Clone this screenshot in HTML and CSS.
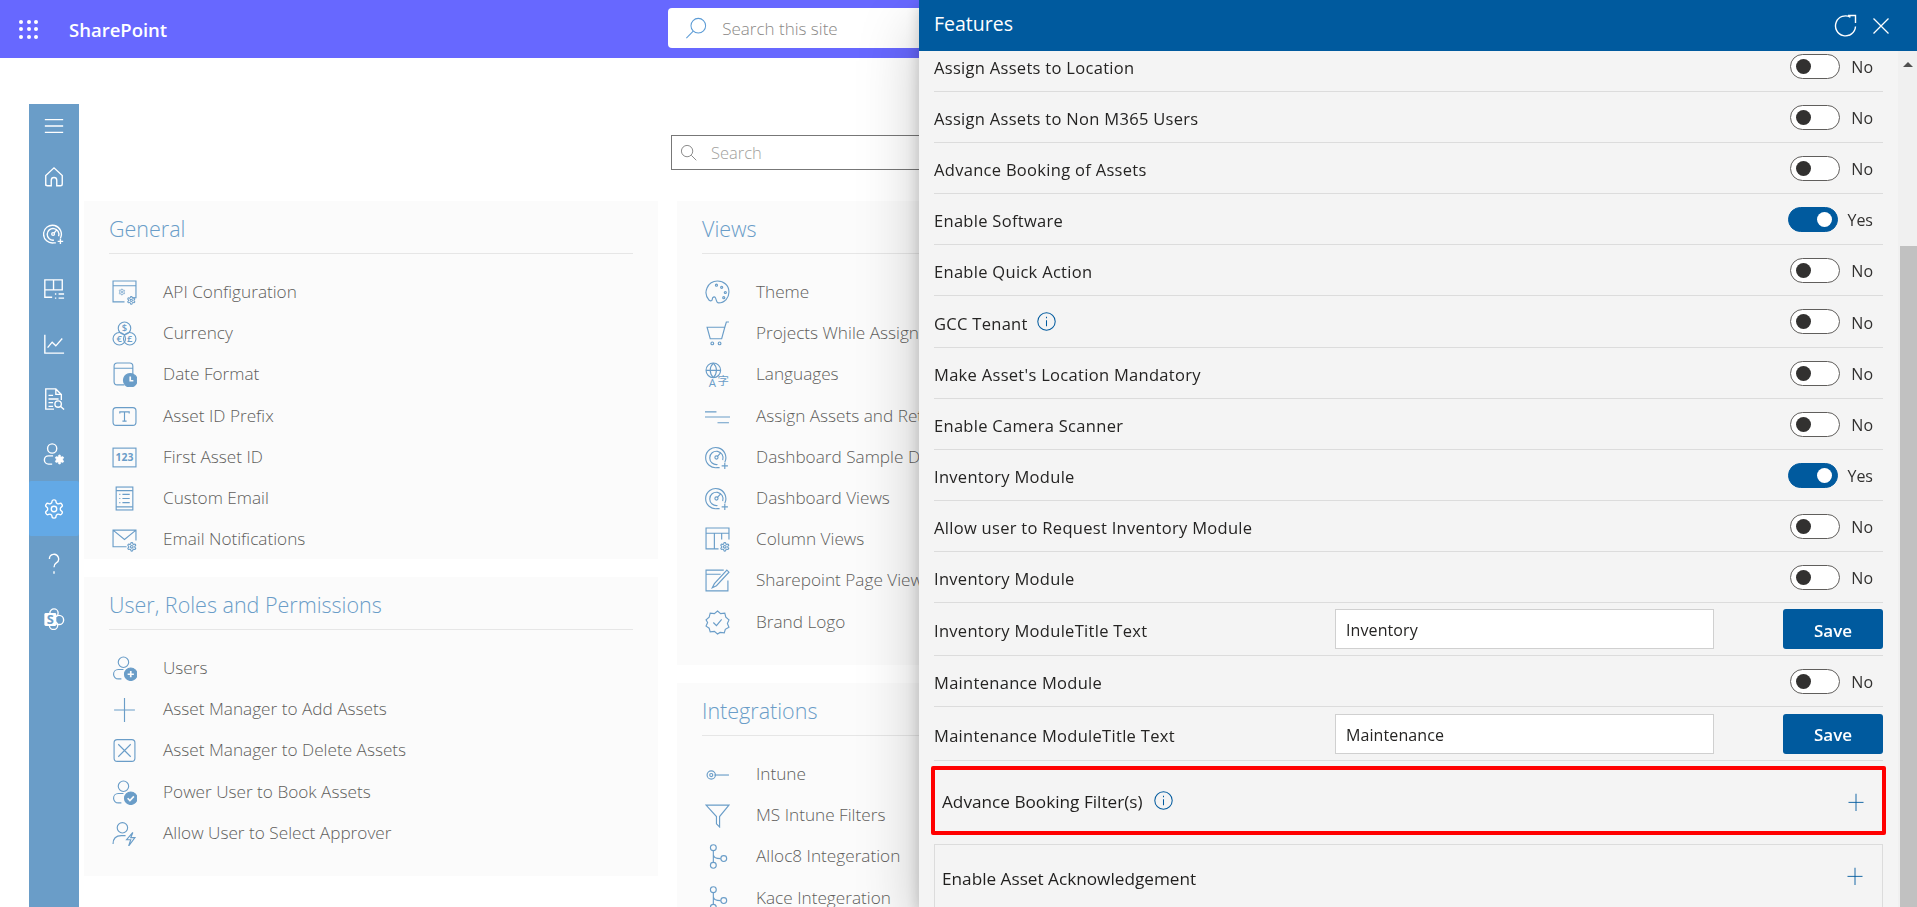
FILE: index.html
```html
<!DOCTYPE html>
<html lang="en">
<head>
<meta charset="utf-8">
<title>Features</title>
<link rel="stylesheet" href="styles.css">
</head>
<body>
<svg class="defs" width="0" height="0" aria-hidden="true">
<defs>
<symbol id="gear" viewBox="0 0 24 24"><path d="M12.22 2h-.44a2 2 0 0 0-2 2v.18a2 2 0 0 1-1 1.73l-.43.25a2 2 0 0 1-2 0l-.15-.08a2 2 0 0 0-2.73.73l-.22.38a2 2 0 0 0 .73 2.73l.15.1a2 2 0 0 1 1 1.72v.51a2 2 0 0 1-1 1.74l-.15.09a2 2 0 0 0-.73 2.73l.22.38a2 2 0 0 0 2.73.73l.15-.08a2 2 0 0 1 2 0l.43.25a2 2 0 0 1 1 1.73V20a2 2 0 0 0 2 2h.44a2 2 0 0 0 2-2v-.18a2 2 0 0 1 1-1.73l.43-.25a2 2 0 0 1 2 0l.15.08a2 2 0 0 0 2.73-.73l.22-.39a2 2 0 0 0-.73-2.73l-.15-.08a2 2 0 0 1-1-1.74v-.5a2 2 0 0 1 1-1.74l.15-.09a2 2 0 0 0 .73-2.73l-.22-.38a2 2 0 0 0-2.73-.73l-.15.08a2 2 0 0 1-2 0l-.43-.25a2 2 0 0 1-1-1.73V4a2 2 0 0 0-2-2z"/><circle cx="12" cy="12" r="3"/></symbol>
<symbol id="dash" viewBox="0 0 24 24"><path d="M19 16.500A9.700 9.700 0 1 0 12 21.700h2"/><path d="M17 14.500a6.400 6.400 0 1 0-5 4.200"/><circle cx="11" cy="12" r="1.500"/><path d="M12 11l3-3.500M19 17v6M16 20h6"/></symbol>
<symbol id="api" viewBox="0 0 24 24"><path d="M19 17h4V1H1v20h11M1 5.500h22"/><use href="#gear" class="sg" x="6" y="8" width="7" height="7"/><use href="#gear" class="sg" x="14" y="15" width="9" height="9"/></symbol>
<symbol id="currency" viewBox="0 0 24 24"><circle cx="12" cy="7" r="6"/><circle cx="7" cy="17" r="6"/><circle cx="17" cy="17" r="6"/><text x="12" y="10" class="g">$</text><text x="7" y="20" class="g">€</text><text x="17" y="20" class="g">£</text></symbol>
<symbol id="date" viewBox="0 0 24 24"><path d="M12 22H5a3 3 0 0 1-3-3V4a3 3 0 0 1 3-3h12a3 3 0 0 1 3 3v8M2 6h18"/><circle class="solid" cx="17.500" cy="17.500" r="6.500"/><path class="cut" d="M17.500 14v4h3"/></symbol>
<symbol id="prefix" viewBox="0 0 24 24"><rect x="1" y="3.500" width="22" height="17" rx="3"/><path d="M7.500 9V7.500h9V9M12 7.500v9M10 16.500h4"/></symbol>
<symbol id="num" viewBox="0 0 24 24"><rect x="1" y="3" width="22" height="18"/><text x="12" y="15.500" class="n">123</text></symbol>
<symbol id="doc" viewBox="0 0 24 24"><rect x="4" y="1" width="16" height="22"/><path d="M4 4.500h16M7 8h1M10 8h7M7 12h1M10 12h7M7 16h1M10 16h7M4 20h16"/></symbol>
<symbol id="mail" viewBox="0 0 24 24"><path d="M14 19H1V3h22v10M1 3l11 9 11-9"/><use href="#gear" class="sg" x="14" y="14" width="10" height="10"/></symbol>
<symbol id="useradd" viewBox="0 0 24 24"><circle cx="11" cy="6" r="5"/><path d="M9 22H6a4.500 4.500 0 0 1 0-9h5"/><circle class="solid" cx="18" cy="17.500" r="6"/><path class="cut" d="M18 14.500v6M15 17.500h6"/></symbol>
<symbol id="plus" viewBox="0 0 24 24"><path d="M12 1v23M2 12.500h20"/></symbol>
<symbol id="xbox" viewBox="0 0 24 24"><rect x="2" y="1.500" width="20" height="21" rx="3"/><path d="M6 6l12 12M18 6L6 18"/></symbol>
<symbol id="usercheck" viewBox="0 0 24 24"><circle cx="11" cy="6" r="5"/><path d="M9 22H6a4.500 4.500 0 0 1 0-9h5"/><circle class="solid" cx="18" cy="17.500" r="6"/><path class="cut" d="M15 17.500l2.200 2.200 3.800-4"/></symbol>
<symbol id="userbolt" viewBox="0 0 24 24"><circle cx="10" cy="6.500" r="5"/><path d="M1 22c0-5 3-8 8-8h4"/><path d="M20 11l-6 7h4l-2 6 6-8h-4z"/></symbol>
<symbol id="palette" viewBox="0 0 24 24"><path d="M12 1a11 11 0 0 0-8 18.500c1.500 1 3 .5 3-1 0-2 2-3 3-1.500 1 2 1 5 3 5 6 0 10-5 10-10.500C23 5 18 1 12 1z"/><circle cx="16" cy="7" r="1"/><circle cx="19.500" cy="12" r="1"/><circle cx="18" cy="17" r="1"/><circle cx="11" cy="5" r="1"/></symbol>
<symbol id="cart" viewBox="0 0 24 24"><path d="M2 6h17l-3 11H5zM19 6l1.500-5H23"/><circle cx="7" cy="21.500" r="1.300"/><circle cx="14" cy="21.500" r="1.300"/></symbol>
<symbol id="lang" viewBox="0 0 24 24"><circle cx="8" cy="8" r="7"/><path d="M1 8h14M8 1c-4 4-4 10 0 14M8 1c4 4 4 10 0 14"/><text x="7" y="24" class="l">A</text><text x="17.500" y="22" class="l">字</text></symbol>
<symbol id="lines" viewBox="0 0 24 24"><path d="M0 7.500h11M0 12.500h24M12 18h11"/></symbol>
<symbol id="columns" viewBox="0 0 24 24"><path d="M13 21H1V1h22v11M1 6h22M9 6v15M16 6v6"/><use href="#gear" class="sg" x="14" y="14" width="10" height="10"/></symbol>
<symbol id="page" viewBox="0 0 24 24"><path d="M22 12v10H1V2h17M1 6h14"/><path d="M21 2l2 2L11 17l-4 2 2-4z"/></symbol>
<symbol id="badge" viewBox="0 0 24 24"><path d="M12 1l3 2.500 4-.500 1 3.800 3 2.700-1.500 3.500 1.500 3.500-3.500 2-1 3.500-4-.500L12 23l-3-2.500-4 .5-1-3.500-3-2 1.500-3.500L1 9.500l3-2.700L5 3l4 .5z"/><path d="M8 12l3 3 5-6"/></symbol>
<symbol id="intune" viewBox="0 0 24 24"><circle cx="6" cy="12.500" r="4"/><circle cx="6" cy="12.500" r="1.500"/><path d="M9 12.500h14"/></symbol>
<symbol id="filter" viewBox="0 0 24 24"><path d="M1 2h22l-9 11v10l-3-3v-7z"/></symbol>
<symbol id="branch" viewBox="0 0 24 24"><circle cx="8" cy="3.500" r="2.800"/><circle cx="8" cy="20.500" r="2.800"/><circle cx="18" cy="14" r="2.800"/><path d="M8 6.500v11M8 10c0 3 3 4 7 4"/></symbol>
<symbol id="info" viewBox="0 0 24 24"><circle cx="12" cy="12" r="11"/><path d="M12 10.500V18M12 6v2"/></symbol>
</defs>
</svg>

<header class="topbar">
  <div class="waffle" aria-hidden="true"><i></i><i></i><i></i><i></i><i></i><i></i><i></i><i></i><i></i></div>
  <span class="brand">SharePoint</span>
  <div class="sitesearch">
    <svg class="sitesearch-icon" viewBox="0 0 24 24"><circle cx="14.500" cy="9.500" r="8"/><path d="M9 15.500L1.500 23"/></svg>
    <span>Search this site</span>
  </div>
</header>

<div class="app">
  <nav class="rail">
    <div class="rail-item rail-first"><svg class="ri" viewBox="0 0 24 24"><path d="M2 5h20M2 12h20M2 19h20"/></svg></div>
    <div class="rail-item"><svg class="ri" viewBox="0 0 24 24"><path d="M3 21.500V10.500L12 2l9 8.500v9a2 2 0 0 1-2 2h-4v-6a3 3 0 0 0-6 0v6H5a2 2 0 0 1-2-2z"/></svg></div>
    <div class="rail-item"><svg class="ri"><use href="#dash"/></svg></div>
    <div class="rail-item"><svg class="ri" viewBox="0 0 24 24"><path d="M10 21H2V2h19v11H2M11.500 2v11"/><path d="M13 17.500h1.500M17 17.500h6M13 22h1.500M17 22h6"/></svg></div>
    <div class="rail-item"><svg class="ri" viewBox="0 0 24 24"><path d="M2 2v20h21M5 16l5-6 4 4 7-8"/></svg></div>
    <div class="rail-item"><svg class="ri" viewBox="0 0 24 24"><path d="M12 23H3V1h11l6 6v6M14 1v6h6M6 8h5M6 12h11M6 16h5M6 20h5"/><circle cx="16.500" cy="17.500" r="3.500"/><path d="M19 20l4 3.500"/></svg></div>
    <div class="rail-item"><svg class="ri" viewBox="0 0 24 24"><circle cx="10" cy="6" r="5"/><path d="M10 23H6a4.500 4.500 0 0 1 0-9h5"/><use href="#gear" class="fillgear" x="12" y="12" width="12" height="12"/></svg></div>
    <div class="rail-item rail-active"><svg class="ri"><use href="#gear"/></svg></div>
    <div class="rail-item"><svg class="ri" viewBox="0 0 24 24"><path d="M7 6.500a5 5 0 1 1 7.500 4.300c-1.800 1.200-2.500 2.200-2.500 4.700M12 20v2.500"/></svg></div>
    <div class="rail-item"><svg class="ri" viewBox="0 0 24 24"><circle cx="12" cy="5.500" r="4.500"/><circle cx="17.500" cy="13" r="5"/><circle cx="11.500" cy="19" r="4.500"/><rect class="railfill" x="1.500" y="5.500" width="13" height="14" rx="1.500"/><text x="8" y="17" class="s">S</text></svg></div>
  </nav>

  <main class="content">
    <div class="toolbar">
      <div class="pagesearch">
        <svg class="pagesearch-icon" viewBox="0 0 24 24"><circle cx="10" cy="10" r="8"/><path d="M16 16l7 7"/></svg>
        <span>Search</span>
      </div>
    </div>
    <div class="columns">
      <div class="column column-left">
        <section class="card card-general">
          <h2>General</h2>
          <ul class="links">
            <li><svg class="li"><use href="#api"/></svg>API Configuration</li>
            <li><svg class="li"><use href="#currency"/></svg>Currency</li>
            <li><svg class="li"><use href="#date"/></svg>Date Format</li>
            <li><svg class="li"><use href="#prefix"/></svg>Asset ID Prefix</li>
            <li><svg class="li"><use href="#num"/></svg>First Asset ID</li>
            <li><svg class="li"><use href="#doc"/></svg>Custom Email</li>
            <li><svg class="li"><use href="#mail"/></svg>Email Notifications</li>
          </ul>
        </section>
        <section class="card card-users">
          <h2>User, Roles and Permissions</h2>
          <ul class="links">
            <li><svg class="li"><use href="#useradd"/></svg>Users</li>
            <li><svg class="li"><use href="#plus"/></svg>Asset Manager to Add Assets</li>
            <li><svg class="li"><use href="#xbox"/></svg>Asset Manager to Delete Assets</li>
            <li><svg class="li"><use href="#usercheck"/></svg>Power User to Book Assets</li>
            <li><svg class="li"><use href="#userbolt"/></svg>Allow User to Select Approver</li>
          </ul>
        </section>
      </div>
      <div class="column column-right">
        <section class="card card-views">
          <h2>Views</h2>
          <ul class="links">
            <li><svg class="li"><use href="#palette"/></svg>Theme</li>
            <li><svg class="li"><use href="#cart"/></svg>Projects While Assigning Assets</li>
            <li><svg class="li"><use href="#lang"/></svg>Languages</li>
            <li><svg class="li"><use href="#lines"/></svg>Assign Assets and Return</li>
            <li><svg class="li"><use href="#dash"/></svg>Dashboard Sample Data</li>
            <li><svg class="li"><use href="#dash"/></svg>Dashboard Views</li>
            <li><svg class="li"><use href="#columns"/></svg>Column Views</li>
            <li><svg class="li"><use href="#page"/></svg>Sharepoint Page Views</li>
            <li><svg class="li"><use href="#badge"/></svg>Brand Logo</li>
          </ul>
        </section>
        <section class="card card-integrations">
          <h2>Integrations</h2>
          <ul class="links">
            <li><svg class="li"><use href="#intune"/></svg>Intune</li>
            <li><svg class="li"><use href="#filter"/></svg>MS Intune Filters</li>
            <li><svg class="li"><use href="#branch"/></svg>Alloc8 Integeration</li>
            <li><svg class="li"><use href="#branch"/></svg>Kace Integeration</li>
          </ul>
        </section>
      </div>
    </div>
  </main>
</div>

<aside class="panel">
  <header class="panel-head">
    <span class="panel-title">Features</span>
    <svg class="head-icon refresh" viewBox="0 0 24 24"><path d="M21.500 12.500A10 10 0 1 1 16.500 3.200"/><path d="M14 1.500h7.500V9"/></svg>
    <svg class="head-icon close" viewBox="0 0 24 24"><path d="M3 3l18 18M21 3L3 21"/></svg>
  </header>
  <div class="panel-main">
    <div class="panel-body">
      <div class="rows">
        <div class="row"><span class="label">Assign Assets to Location</span><span class="switch"></span><span class="state">No</span></div>
        <div class="row"><span class="label">Assign Assets to Non M365 Users</span><span class="switch"></span><span class="state">No</span></div>
        <div class="row"><span class="label">Advance Booking of Assets</span><span class="switch"></span><span class="state">No</span></div>
        <div class="row"><span class="label">Enable Software</span><span class="switch on"></span><span class="state yes">Yes</span></div>
        <div class="row"><span class="label">Enable Quick Action</span><span class="switch"></span><span class="state">No</span></div>
        <div class="row row-info"><span class="label">GCC Tenant</span><svg class="info"><use href="#info"/></svg><span class="switch"></span><span class="state">No</span></div>
        <div class="row"><span class="label">Make Asset's Location Mandatory</span><span class="switch"></span><span class="state">No</span></div>
        <div class="row"><span class="label">Enable Camera Scanner</span><span class="switch"></span><span class="state">No</span></div>
        <div class="row"><span class="label">Inventory Module</span><span class="switch on"></span><span class="state yes">Yes</span></div>
        <div class="row"><span class="label">Allow user to Request Inventory Module</span><span class="switch"></span><span class="state">No</span></div>
        <div class="row"><span class="label">Inventory Module</span><span class="switch"></span><span class="state">No</span></div>
        <div class="row row-form"><span class="label label-form">Inventory ModuleTitle Text</span><span class="field">Inventory</span><button class="save">Save</button></div>
        <div class="row"><span class="label">Maintenance Module</span><span class="switch"></span><span class="state">No</span></div>
        <div class="row row-form row-form-b"><span class="label label-form">Maintenance ModuleTitle Text</span><span class="field">Maintenance</span><button class="save">Save</button></div>
      </div>
      <div class="acc acc-marked"><span class="acc-label">Advance Booking Filter(s)</span><svg class="info"><use href="#info"/></svg><svg class="acc-plus"><use href="#plus"/></svg></div>
      <div class="acc"><span class="acc-label">Enable Asset Acknowledgement</span><svg class="acc-plus"><use href="#plus"/></svg></div>
    </div>
    <div class="scrollbar"><span class="arrow"></span><span class="thumb"></span></div>
  </div>
</aside>
</body>
</html>
```

FILE: styles.css
```css
* { box-sizing: border-box; }
html, body { margin: 0; height: 100%; overflow: hidden; }
body { font-family: "Open Sans", "Liberation Sans", sans-serif; background: #fff; display: flex; flex-direction: column; }
.defs { position: absolute; }
svg { fill: none; stroke: currentColor; stroke-width: 1.3; flex: none; }
svg text { fill: currentColor; stroke: none; font-family: "Open Sans", "Noto Sans CJK SC", sans-serif; text-anchor: middle; }
svg .g { font-size: 9px; font-weight: 600; }
svg .n { font-size: 10px; font-weight: 700; }
svg .l { font-size: 11px; font-weight: 400; }
svg .s { font-size: 14px; font-weight: 700; fill: #6a9dc8; }
.solid { fill: currentColor; }
.cut { stroke: #fbfbfb; stroke-width: 1.6; }
.railfill { fill: #fff; stroke: none; }
.fillgear { fill: #fff; }
.sg { stroke-width: 2.600; }

.topbar { height: 58px; flex: none; background: #6768ff; display: flex; align-items: center; color: #fff; }
.waffle { display: grid; grid-template-columns: repeat(3, 4px); gap: 3.500px; margin-left: 19px; }
.waffle i { width: 4px; height: 4px; border-radius: 50%; background: #fff; }
.brand { margin-left: 31px; font-size: 18.500px; font-weight: 600; }
.sitesearch { margin-left: 501px; margin-top: -2px; width: 500px; height: 40px; background: #fff; border-radius: 4px; display: flex; align-items: center; color: #8a8886; font-size: 17px; font-weight: 300; }
.sitesearch-icon { width: 22px; height: 22px; margin: 0 15px 0 17px; color: #5b9bd5; stroke-width: 1.100; }

.app { flex: 1; display: flex; padding: 46px 0 0 29px; min-height: 0; }
.rail { width: 50px; flex: none; background: #6a9dc8; color: #fff; display: flex; flex-direction: column; align-items: stretch; }
.rail-item { height: 55px; flex: none; display: flex; align-items: center; justify-content: center; }
.rail-first { height: 44px; }
.rail-item:nth-child(2) { height: 58px; }
.rail-active { background: #63a9e6; border-radius: 2px; }
.ri { width: 22px; height: 22px; stroke-width: 1.500; }

.content { flex: 1; min-width: 0; margin-left: 5px; display: flex; flex-direction: column; }
.toolbar { height: 97px; flex: none; padding-top: 31px; padding-left: 587px; }
.pagesearch { width: 560px; height: 35px; border: 1px solid #777; background: #fff; display: flex; align-items: center; color: #a19f9d; font-size: 16.500px; font-weight: 300; }
.pagesearch-icon { width: 17px; height: 17px; margin: 0 14px 0 8px; color: #777; stroke-width: 1.200; }
.columns { display: flex; gap: 19px; }
.column { display: flex; flex-direction: column; gap: 18px; }
.column-left { width: 574px; }
.column-right { width: 560px; }
.card { background: #fbfbfb; padding: 0 25px; }
.card-general { height: 358px; }
.card-users { height: 299px; }
.card-views { height: 464px; }
.card-integrations { height: 300px; }
.card h2 { margin: 0; height: 53px; padding-top: 13px; border-bottom: 1px solid #e6e6e6; font-size: 21.500px; line-height: 30px; font-weight: 300; color: #6a9dc8; }
.links { list-style: none; margin: 17px 0 0; padding: 0; }
.links li { height: 41.200px; display: flex; align-items: center; font-size: 17.200px; font-weight: 300; color: #605e5c; white-space: nowrap; }
.li { width: 25px; height: 25px; margin: 2px 26px 0 3px; color: #6a9dc8; stroke-width: 1.100; }

.panel { position: fixed; top: 0; right: 0; bottom: 0; left: 919px; background: #f4f4f4; display: flex; flex-direction: column; box-shadow: 0 25.600px 57.600px rgba(0,0,0,.22), 0 4.800px 14.400px rgba(0,0,0,.18); }
.panel-head { height: 51px; flex: none; background: #005a9e; color: #fff; display: flex; align-items: center; padding: 0 26px 0 15px; }
.panel-title { font-size: 19.500px; flex: 1; margin-top: -5px; }
.head-icon { width: 24px; height: 24px; }
.refresh { margin-right: 13px; stroke-width: 1.400; margin-top: 1px; }
.close { width: 20px; height: 20px; stroke-width: 1.500; }
.panel-main { flex: 1; display: flex; min-height: 0; }
.panel-body { flex: 1; min-width: 0; overflow: hidden; padding: 0 15px; }
.rows { margin-top: -10px; }
.row { height: 51px; border-bottom: 1px solid #dcdcdc; display: flex; align-items: center; color: #252423; font-size: 16.500px; letter-spacing: .3px; }
.row-info { height: 52px; }
.row-form { height: 53px; }
.row-form-b { height: 54px; }
.label { flex: 1; min-width: 0; padding-top: 3px; }
.row-info .label { flex: none; margin-right: 9px; }
.row-info .info { margin-right: auto; }
.label-form { flex: none; width: 401px; padding-top: 3px; }
.info { width: 19px; height: 19px; color: #005a9e; stroke-width: 1.300; }
.switch { width: 50px; height: 25px; border-radius: 13px; background: #fff; border: 1px solid #605e5c; display: flex; align-items: center; padding-left: 5px; }
.switch::before { content: ""; width: 15px; height: 15px; border-radius: 50%; background: #323130; }
.switch.on { background: #005a9e; border-color: #005a9e; justify-content: flex-end; padding: 0 5px 0 0; margin-right: 2px; margin-left: -2px; }
.switch.on::before { background: #fff; }
.state { width: 33px; margin-right: 10px; text-align: right; font-size: 16px; letter-spacing: 0; color: #323130; padding-top: 2px; }
.field { width: 379px; height: 40px; background: #fff; border: 1px solid #d0d0d0; display: flex; align-items: center; padding: 2px 0 0 10px; font-size: 16px; letter-spacing: .1px; }
.save { margin-left: auto; width: 100px; height: 40px; border: 0; padding: 2px 0 0; border-radius: 3px; background: #005a9e; color: #fff; font: 600 17px "Open Sans", sans-serif; letter-spacing: 0; }
.acc { height: 69px; border: 1px solid #dcdcdc; display: flex; align-items: center; padding: 0 18px 0 7px; margin-top: 9px; }
.acc-marked { margin: 5px -3px 0; border: 4px solid #f00; border-radius: 2px; padding: 0 17px 0 7px; }
.acc-label { font-size: 17.200px; font-weight: 500; color: #201f1e; margin-right: 11px; }
.acc-marked .acc-label { padding-top: 2px; }
.acc-plus { width: 18px; height: 18px; color: #005a9e; margin-left: auto; stroke-width: 1.200; margin-top: -5px; }
.acc-marked .acc-plus { margin-top: 2px; }
.scrollbar { width: 19px; flex: none; background: #f0f0f0; display: flex; flex-direction: column; align-items: center; padding-top: 11px; }
.arrow { width: 0; height: 0; border: 5px solid transparent; border-top: 0; border-bottom-color: #505050; }
.thumb { margin-top: 179px; align-self: flex-end; width: 17px; flex: 1; background: #c1c1c1; }
```
